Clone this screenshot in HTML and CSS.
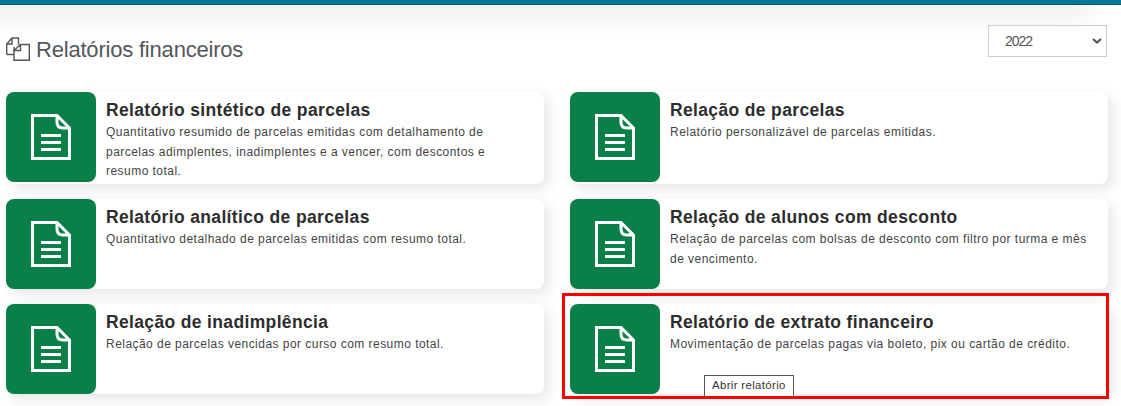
FILE: index.html
```html
<!DOCTYPE html>
<html lang="pt-BR">
<head>
<meta charset="utf-8">
<title>Relatórios financeiros</title>
<link rel="stylesheet" href="styles.css">
</head>
<body>
<svg class="defs" width="0" height="0" aria-hidden="true">
  <symbol id="doc" viewBox="0 0 40 46">
    <path d="M1.5 1.5H26L38.5 14V44.5H1.5Z M26 1.5V8Q26 14 32 14H38.5 M10 21.5H30 M10 28.5H30 M10 35.5H30" fill="none" stroke="#fff" stroke-width="3"/>
  </symbol>
</svg>
<div class="topbar"></div>
<main class="page">
  <header class="head">
    <h1 class="title">
      <svg class="title-icon" width="24" height="24" viewBox="0 0 24 24" aria-hidden="true"><path d="M.7 17.5V7L6 1H12.5V7.5 M6 1V7H.7 M8 17.5H.7 M8 10V23.3H23.3V7.5H14.5L8 13.5H14.5V7.5" fill="none" stroke="#54565c" stroke-width="1.4"/></svg>
      Relatórios financeiros
    </h1>
    <div class="year-wrap">
      <select class="year"><option>2022</option></select>
      <svg class="chevron" width="10" height="6" viewBox="0 0 10 6" aria-hidden="true"><path d="M1 1L5 4.5L9 1" fill="none" stroke="#555" stroke-width="2.2"/></svg>
    </div>
  </header>
  <section class="grid">
    <a class="card"><span class="tile"><svg class="doc"><use href="#doc"/></svg></span><div class="body"><h2>Relatório sintético de parcelas</h2><p>Quantitativo resumido de parcelas emitidas com detalhamento de parcelas adimplentes, inadimplentes e a vencer, com descontos e resumo total.</p></div></a>
    <a class="card"><span class="tile"><svg class="doc"><use href="#doc"/></svg></span><div class="body"><h2>Relação de parcelas</h2><p>Relatório personalizável de parcelas emitidas.</p></div></a>
    <a class="card"><span class="tile"><svg class="doc"><use href="#doc"/></svg></span><div class="body"><h2>Relatório analítico de parcelas</h2><p>Quantitativo detalhado de parcelas emitidas com resumo total.</p></div></a>
    <a class="card"><span class="tile"><svg class="doc"><use href="#doc"/></svg></span><div class="body"><h2>Relação de alunos com desconto</h2><p>Relação de parcelas com bolsas de desconto com filtro por turma e mês de vencimento.</p></div></a>
    <a class="card"><span class="tile"><svg class="doc"><use href="#doc"/></svg></span><div class="body"><h2>Relação de inadimplência</h2><p>Relação de parcelas vencidas por curso com resumo total.</p></div></a>
    <a class="card highlighted"><span class="tile"><svg class="doc"><use href="#doc"/></svg></span><div class="body"><h2>Relatório de extrato financeiro</h2><p>Movimentação de parcelas pagas via boleto, pix ou cartão de crédito.</p></div><span class="tooltip">Abrir relatório</span></a>
  </section>
</main>
</body>
</html>
```
FILE: styles.css
```css
* { box-sizing: border-box; }
html { background: #fff; }
html, body { margin: 0; height: 100%; overflow: hidden; }
body { font-family: "Liberation Sans", Arial, sans-serif; color: #333; }
.defs { position: absolute; }
.topbar {
  position: relative;
  height: 5px;
  background: #07769b;
  border-bottom: 1px solid #045a76;
}
.topbar::after {
  content: "";
  position: absolute;
  z-index: -1;
  left: -30px;
  right: 30px;
  top: 0;
  height: 5px;
  box-shadow: 0 3px 30px rgba(0, 0, 0, .36);
}
.page { padding: 20px 14px 0 6px; }
.head { display: flex; justify-content: space-between; align-items: flex-start; height: 67px; }
.title {
  margin: 11px 0 0;
  display: flex;
  align-items: center;
  gap: 6px;
  font-size: 22px;
  font-weight: 400;
  letter-spacing: -.2px;
  line-height: 28px;
  color: #54565c;
}
.title-icon { margin-top: -2px; }
.year-wrap { position: relative; }
.year {
  display: block;
  appearance: none;
  width: 119px;
  height: 32px;
  padding: 0 16px;
  border: 1px solid #ccc;
  border-radius: 0;
  background: #fff;
  color: #555;
  font: 14px "Liberation Sans", Arial, sans-serif;
  letter-spacing: -1px;
}
.chevron { position: absolute; right: 5px; top: 13px; }
.grid { display: grid; grid-template-columns: 538px 538px; column-gap: 26px; row-gap: 15px; grid-auto-rows: minmax(90px, auto); }
.card {
  position: relative;
  display: flex;
  background: #fff;
  border-radius: 8px;
  box-shadow: 5px 5px 14px rgba(0, 0, 0, .1);
}
.tile {
  flex: none;
  width: 90px;
  height: 90px;
  display: flex;
  align-items: center;
  justify-content: center;
  background: #0a8048;
  border-radius: 8px;
}
.doc { width: 40px; height: 46px; }
.body { padding: 7px 16px 2.5px 10px; min-width: 0; }
.body h2 {
  margin: 0;
  font-size: 17.5px;
  line-height: 22px;
  font-weight: 700;
  letter-spacing: .35px;
  color: #2d2d2d;
}
.body p {
  margin: 2px 0 0;
  font-size: 12px;
  line-height: 19.5px;
  letter-spacing: .46px;
  color: #444;
}
.highlighted::after {
  content: "";
  position: absolute;
  inset: -11px -1px -5px -8px;
  border: 3px solid #f00;
  pointer-events: none;
}
.tooltip {
  position: absolute;
  left: 134px;
  top: 71px;
  height: 23px;
  padding: 3px 7px 0;
  background: #fff;
  border: 1px solid #555;
  font-size: 11.4px;
  letter-spacing: .36px;
  color: #333;
  white-space: nowrap;
}
```
